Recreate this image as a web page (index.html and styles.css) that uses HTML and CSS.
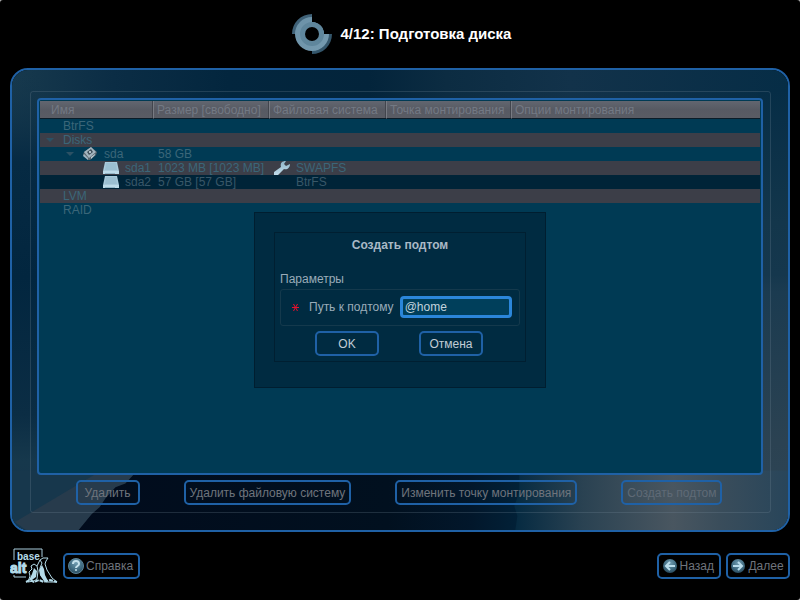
FILE: index.html
```html
<!DOCTYPE html>
<html lang="ru">
<head>
<meta charset="utf-8">
<meta name="viewport" content="width=device-width, initial-scale=1">
<title>Подготовка диска</title>
<link rel="stylesheet" href="styles.css">
</head>
<body>
<svg width="0" height="0" class="defs" aria-hidden="true">
  <defs>
    <linearGradient id="ice" x1="0" y1="0" x2="0" y2="1">
      <stop offset="0" stop-color="#8db4c8"/><stop offset="1" stop-color="#c2dcea"/>
    </linearGradient>
    <linearGradient id="blade" x1="0" y1="0" x2="1" y2="1">
      <stop offset="0" stop-color="#6b91a7"/><stop offset="1" stop-color="#769bb0"/>
    </linearGradient>
    <radialGradient id="ball" cx=".5" cy=".3" r=".75">
      <stop offset="0" stop-color="#6f9bb0"/><stop offset=".6" stop-color="#3f6a80"/><stop offset="1" stop-color="#26465a"/>
    </radialGradient>
    <symbol id="drive" viewBox="0 0 16 12">
      <path d="M2 0h12l2 9v3H0V9z" fill="#a9cadb"/>
      <path d="M3 1h10l1 7H2z" fill="#9bbfd1"/>
      <path d="M0 9h16v3H0z" fill="#bddbe9"/>
      <path d="M2 11h10v1H2z" fill="#94b6c7"/>
    </symbol>
  </defs>
</svg>

<header class="top">
  <svg class="step-icon" width="40" height="40" viewBox="0 0 40 40" aria-hidden="true">
    <path d="M0 20A20 20 0 0 1 20 0V8A12 12 0 0 0 8 20z" fill="#3f6177"/>
    <path d="M40 20A20 20 0 0 1 20 40V32A12 12 0 0 0 32 20z" fill="#34566b"/>
    <path d="M20 3V8A12 12 0 0 1 32 20H37A17 17 0 1 1 20 3z" fill="url(#blade)"/>
    <circle cx="20" cy="20" r="9.500" fill="none" stroke="#5f869c" stroke-width="5"/>
    <circle cx="20" cy="20" r="7" fill="#000"/>
  </svg>
  <h1>4/12: Подготовка диска</h1>
</header>

<main class="panel">
  <svg class="backdrop" viewBox="0 0 780 464" preserveAspectRatio="none" aria-hidden="true">
    <defs>
      <linearGradient id="bgtop" x1="0" y1="0" x2="1" y2="0">
        <stop offset="0" stop-color="#17394d"/><stop offset=".13" stop-color="#0b2d45"/>
        <stop offset=".28" stop-color="#03263e"/><stop offset=".46" stop-color="#03243b"/>
        <stop offset=".56" stop-color="#0c2c42"/><stop offset=".72" stop-color="#12324a"/><stop offset="1" stop-color="#062d46"/>
      </linearGradient>
      <linearGradient id="bgleft" x1="0" y1="0" x2="0" y2="1">
        <stop offset="0" stop-color="#14364b" stop-opacity="0"/><stop offset=".2" stop-color="#062a43"/>
        <stop offset=".45" stop-color="#02263f"/><stop offset=".75" stop-color="#0b2d44"/>
        <stop offset=".85" stop-color="#16384c"/><stop offset="1" stop-color="#17344b"/>
      </linearGradient>
      <linearGradient id="bgright" x1="0" y1="0" x2="0" y2="1">
        <stop offset="0" stop-color="#062d46"/><stop offset=".3" stop-color="#13364b"/>
        <stop offset=".42" stop-color="#15374d"/><stop offset=".46" stop-color="#1b3b50"/>
        <stop offset=".8" stop-color="#2b4252"/><stop offset="1" stop-color="#2e4556"/>
      </linearGradient>
      <linearGradient id="bgglow" x1="0" y1="0" x2="1" y2="0">
        <stop offset="0" stop-color="#052a41"/><stop offset=".25" stop-color="#2a4252"/>
        <stop offset=".58" stop-color="#495660"/><stop offset=".75" stop-color="#3a4d5b"/><stop offset="1" stop-color="#28455a"/>
      </linearGradient>
      <linearGradient id="bgdark" x1="0" y1="0" x2="1" y2="0">
        <stop offset="0" stop-color="#010b1c"/><stop offset=".5" stop-color="#01101f"/>
        <stop offset=".62" stop-color="#02172b"/><stop offset=".7" stop-color="#02233a"/>
      </linearGradient>
    </defs>
    <path d="M0 0h780v464H0z" fill="url(#bgtop)"/>
    <path d="M0 0h28v464H0z" fill="url(#bgleft)"/>
    <path d="M750 20h30v444H750z" fill="url(#bgright)"/>
    <path d="M28 404h700v60H28z" fill="url(#bgdark)"/>
    <path d="M0 404h90L14 464H0z" fill="#17374c"/>
    <path d="M90 404L3 456L14 464H67L80 448L88 441L94 432L104 421L114 417L126 404z" fill="#273b4c"/>
    <path d="M510 404h270v60H506L508 450L505 440L510 425z" fill="url(#bgglow)"/>
  </svg>

  <section class="frame">
    <div class="tree">
      <table>
        <colgroup><col class="c-name"><col class="c-size"><col class="c-fs"><col class="c-mount"><col></colgroup>
        <thead>
          <tr><th>Имя</th><th>Размер [свободно]</th><th>Файловая система</th><th>Точка монтирования</th><th>Опции монтирования</th></tr>
        </thead>
        <tbody>
          <tr><td><div class="node">BtrFS</div></td><td></td><td></td><td></td><td></td></tr>
          <tr><td><div class="node open">Disks</div></td><td></td><td></td><td></td><td></td></tr>
          <tr>
            <td><div class="node open level-1">
              <svg width="14" height="14" viewBox="0 0 14 14" aria-hidden="true">
                <path d="M1 5L8 0L14 5L13 8L7 13L5 13L0 8z" fill="#59656d"/>
                <path d="M1 5L8 0L13 5L6 11z" fill="#a3b4be"/>
                <path d="M4 5L8 2L10 5L6 8z" fill="#43525c"/>
                <circle cx="7" cy="5" r="1" fill="#d5e5ed"/>
                <path d="M1 7L5 11V13L0 9z" fill="#9fb4c0"/>
                <path d="M8 10L12 7V8L8 12z" fill="#bfd0d8"/>
              </svg>sda</div></td>
            <td>58 GB</td><td></td><td></td><td></td>
          </tr>
          <tr>
            <td><div class="node level-2"><svg width="16" height="12" aria-hidden="true"><use href="#drive"/></svg>sda1</div></td>
            <td>1023 MB [1023 MB]</td>
            <td><div class="fs">
              <svg width="16" height="14" viewBox="0 0 16 14" aria-hidden="true">
                <path d="M0 14V11L7 6C6 2 8 0 12 0L10 3L12 5L16 3C16 7 13 9 10 8L4 14z" fill="url(#ice)"/>
              </svg>SWAPFS</div></td>
            <td></td><td></td>
          </tr>
          <tr class="selected">
            <td><div class="node level-2"><svg width="16" height="12" aria-hidden="true"><use href="#drive"/></svg>sda2</div></td>
            <td>57 GB [57 GB]</td>
            <td><div class="fs no-icon">BtrFS</div></td>
            <td></td><td></td>
          </tr>
          <tr><td><div class="node">LVM</div></td><td></td><td></td><td></td><td></td></tr>
          <tr><td><div class="node">RAID</div></td><td></td><td></td><td></td><td></td></tr>
        </tbody>
      </table>
    </div>
    <div class="actions">
      <button type="button" class="btn">Удалить</button>
      <button type="button" class="btn">Удалить файловую систему</button>
      <button type="button" class="btn">Изменить точку монтирования</button>
      <button type="button" class="btn dim">Создать подтом</button>
    </div>
  </section>
</main>

<footer class="bottom">
  <svg class="logo" width="48" height="36" viewBox="0 0 48 36" role="img" aria-label="base alt">
    <path d="M4 12V1H32V9M4 27V29H16" fill="none" stroke="#a9cddd" stroke-width="1"/>
    <text x="7" y="12" class="logo-base">base</text>
    <text x="0" y="25" class="logo-alt">alt</text>
    <path d="M30 12L33 10L38 10L36 13L35 16L37 22L42 30L47 34L36 34L31 28L30 20L32 15z" fill="#000" stroke="#b4dbe9" stroke-width="1"/>
    <path d="M32 17L34 21L35 27L38 33L34 33L30 27L29 22z" fill="#b4dbe9"/>
    <path d="M21 18L24 16L27 18L28 23L27 31L24 33L18 34L20 28L19 24L22 21z" fill="#000" stroke="#b4dbe9" stroke-width="1"/>
    <path d="M24 20L27 23L26 29L22 32L19 32L22 26z" fill="#b4dbe9"/>
    <path d="M27 18L30 12" stroke="#b4dbe9" stroke-width="1"/>
    <path d="M16 34L20 32L24 34L29 32L34 34L40 32L47 34" fill="none" stroke="#b4dbe9" stroke-width="2" stroke-dasharray="4 1"/>
  </svg>
  <button type="button" class="btn nav help">
    <svg width="16" height="16" viewBox="0 0 16 16" aria-hidden="true">
      <circle cx="8" cy="8" r="7.500" fill="url(#ball)" stroke="#5b8398" stroke-width="1"/>
      <path d="M5 6C5 2 11 2 11 6C11 8 8 8 8 10" fill="none" stroke="#c4e0ec" stroke-width="2"/>
      <circle cx="8" cy="12" r="1" fill="#c4e0ec"/>
    </svg>Справка</button>
  <span class="spacer"></span>
  <button type="button" class="btn nav">
    <svg width="14" height="14" viewBox="0 0 14 14" aria-hidden="true">
      <circle cx="7" cy="7" r="7" fill="url(#ball)"/>
      <path d="M12 7H3M7 3L3 7L7 11" fill="none" stroke="#b9dceb" stroke-width="2"/>
    </svg>Назад</button>
  <button type="button" class="btn nav next">
    <svg width="14" height="14" viewBox="0 0 14 14" aria-hidden="true">
      <circle cx="7" cy="7" r="7" fill="url(#ball)"/>
      <path d="M2 7H11M7 3L11 7L7 11" fill="none" stroke="#b9dceb" stroke-width="2"/>
    </svg>Далее</button>
</footer>

<div class="overlay">
  <form class="dialog" role="dialog" aria-labelledby="dlg-title">
    <div class="dialog-body">
      <h2 id="dlg-title">Создать подтом</h2>
      <p class="group-title">Параметры</p>
      <div class="group">
        <svg width="8" height="8" viewBox="0 0 8 8" aria-hidden="true">
          <path d="M0 4.500H7M1.500 1L5.500 8M5.500 1L1.500 8" fill="none" stroke="#e8102c" stroke-width="1"/>
        </svg>
        <label for="path">Путь к подтому</label>
        <input id="path" type="text" value="@home">
      </div>
      <div class="dialog-actions">
        <button type="submit" class="btn">OK</button>
        <button type="button" class="btn">Отмена</button>
      </div>
    </div>
  </form>
</div>
</body>
</html>
```
FILE: styles.css
```css
* {
  box-sizing: border-box;
}

html {
  background: #b8b8b8;
}

body {
  margin: 0;
  min-height: 100vh;
  display: flex;
  flex-direction: column;
  background: #000;
  border-radius: 3px;
  font: 12px/14px "Liberation Sans", Arial, sans-serif;
  color: #6f747c;
}

h1, h2, p {
  margin: 0;
}

svg {
  display: block;
  flex: none;
}

.defs {
  position: absolute;
}

.top {
  height: 68px;
  display: flex;
  align-items: center;
  justify-content: center;
  gap: 9px;
  padding-left: 3px;
}

.top h1 {
  font-size: 15px;
  line-height: 18px;
  color: #fff;
}

.panel {
  flex: 1;
  display: flex;
  position: relative;
  overflow: hidden;
  margin: 0 10px;
  padding: 21px 17px 17px 18px;
  border: 2px solid #1f61a6;
  border-radius: 18px;
}

.backdrop {
  position: absolute;
  inset: 0;
  width: 100%;
  height: 100%;
}

.frame {
  flex: 1;
  display: flex;
  flex-direction: column;
  position: relative;
  padding: 6px 7px 7px 6px;
  border: 1px solid rgba(120, 140, 155, 0.25);
  border-radius: 3px;
}

.tree {
  flex: 1;
  border: 2px solid #1f61a6;
  border-radius: 4px;
  padding: 1px;
  background: #003a54;
}

.tree table {
  width: 100%;
  table-layout: fixed;
  border-collapse: separate;
  border-spacing: 0;
}

.c-name { width: 114px; }
.c-size { width: 116px; }
.c-fs { width: 117px; }
.c-mount { width: 125px; }

.tree th {
  height: 18px;
  padding: 0 0 0 3px;
  font-weight: normal;
  text-align: left;
  white-space: nowrap;
  color: #737984;
  background: linear-gradient(#626670, #575a63 50%, #5a5c64);
  border-right: 1px solid #787b83;
  border-bottom: 1px solid #0a1c28;
  box-shadow: inset -1px 0 #42454d;
}

.tree th:first-child {
  padding-left: 11px;
}

.tree th:last-child {
  border-right: 0;
  box-shadow: none;
}

.tree td {
  height: 14px;
  padding: 0 0 0 4px;
  white-space: nowrap;
  color: #3b6679;
}

.tree tbody tr:nth-child(even) {
  background: #3c3e48;
}

.tree tbody .selected {
  background: #002438;
}

.tree .selected td {
  color: #395768;
}

.node {
  display: flex;
  align-items: center;
  height: 14px;
  padding-left: 19px;
  gap: 7px;
}

.node.open::before {
  content: "";
  border: 4px solid transparent;
  border-top-color: #2b5164;
  border-bottom: 0;
  margin: 0 2px 0 -17px;
}

.node.level-1 {
  padding-left: 39px;
}

.node.level-2 {
  padding-left: 59px;
  gap: 6px;
}

.fs {
  display: flex;
  align-items: center;
  gap: 6px;
}

.fs.no-icon {
  padding-left: 22px;
}

.actions {
  display: flex;
  justify-content: center;
  gap: 44px;
  padding: 5px 2px 0 0;
}

.btn {
  display: flex;
  align-items: center;
  justify-content: center;
  min-width: 64px;
  height: 25px;
  padding: 0 4px;
  border: 2px solid #1f61a6;
  border-radius: 5px;
  background: transparent;
  font: inherit;
  white-space: nowrap;
  color: #6f747c;
}

.btn.dim {
  color: #5f6a76;
}

.bottom {
  height: 68px;
  display: flex;
  align-items: center;
  gap: 5px;
  padding: 0 10px;
}

.spacer {
  flex: 1;
}

.nav {
  height: 26px;
  gap: 3px;
  padding: 0 5px 0 4px;
}

.nav.help {
  gap: 2px;
  padding-left: 3px;
}

.nav.next {
  padding: 0 4px 0 3px;
}

.logo text {
  font-family: "Liberation Sans", Arial, sans-serif;
  font-weight: bold;
  fill: #b4dbe9;
}

.logo .logo-base {
  font-size: 10px;
}

.logo .logo-alt {
  font-size: 14px;
  stroke: #b4dbe9;
}

.overlay {
  position: fixed;
  inset: 0;
  display: flex;
  align-items: center;
  justify-content: center;
}

.dialog {
  width: 292px;
  padding: 19px 19px 25px;
  background: #002b41;
  border: 1px solid #001e30;
}

.dialog-body {
  display: flex;
  flex-direction: column;
  padding: 5px;
  border: 1px solid #001f31;
}

.dialog h2 {
  font-size: 12px;
  line-height: 14px;
  text-align: center;
  color: #a9b9c6;
}

.group-title {
  margin-top: 20px;
  color: #9aacb9;
}

.group {
  display: flex;
  align-items: center;
  height: 37px;
  margin-top: 3px;
  padding: 0 7px 2px 11px;
  border: 1px solid #14394c;
  border-radius: 3px;
}

.group label {
  margin: 0 6px 0 9px;
  white-space: nowrap;
  color: #9aacb9;
}

.group input {
  flex: 1;
  min-width: 0;
  height: 22px;
  padding: 0 2px;
  border: 3px solid #2b86da;
  border-radius: 4px;
  background: #003f5b;
  font: inherit;
  color: #c3d4de;
  outline: 0;
}

.dialog-actions {
  display: flex;
  justify-content: center;
  gap: 40px;
  margin-top: 5px;
  padding-right: 2px;
}

.dialog .btn {
  color: #c0ccd5;
}
```
